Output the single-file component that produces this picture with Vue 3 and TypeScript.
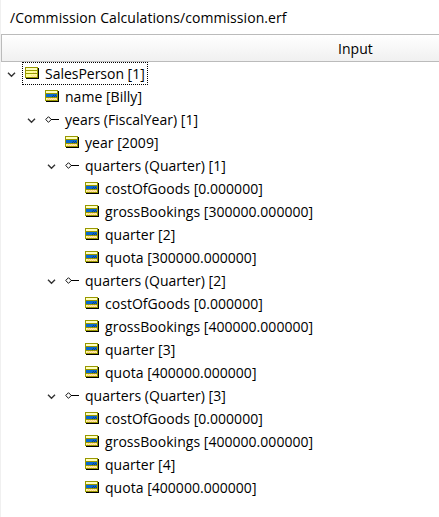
<script setup lang="ts">
interface TreeNode {
  label: string
  kind: 'entity' | 'attribute' | 'association'
  level: number
}

const path = '/Commission Calculations/commission.erf'

const attribute = (label: string, level: number): TreeNode => ({ label, kind: 'attribute', level })

const quarter = (index: number, amount: string): TreeNode[] => [
  { label: `quarters (Quarter) [${index}]`, kind: 'association', level: 2 },
  attribute('costOfGoods [0.000000]', 3),
  attribute(`grossBookings [${amount}]`, 3),
  attribute(`quarter [${index + 1}]`, 3),
  attribute(`quota [${amount}]`, 3),
]

const nodes: TreeNode[] = [
  { label: 'SalesPerson [1]', kind: 'entity', level: 0 },
  attribute('name [Billy]', 1),
  { label: 'years (FiscalYear) [1]', kind: 'association', level: 1 },
  attribute('year [2009]', 2),
  ...quarter(1, '300000.000000'),
  ...quarter(2, '400000.000000'),
  ...quarter(3, '400000.000000'),
]
</script>

<template>
  <main class="panel">
    <div class="path">{{ path }}</div>
    <div class="header">Input</div>
    <div class="tree" role="tree">
      <div
        v-for="(node, i) in nodes"
        :key="i"
        class="row"
        role="treeitem"
        :style="{ paddingLeft: node.level * 20 + 'px' }"
      >
        <span class="toggle">
          <svg v-if="node.kind !== 'attribute'" width="9" height="6" viewBox="0 0 9 6">
            <path d="M1 .8 4.5 4.3 8 .8" fill="none" stroke="#333" stroke-width="1.4" />
          </svg>
        </span>
        <span class="item" :class="{ focused: i === 0 }">
          <svg v-if="node.kind === 'association'" class="icon" width="14" height="12" viewBox="0 0 14 12">
            <path d="M.7 6.5 3.5 3.7 6.3 6.5 3.5 9.3Z" fill="#fff" stroke="#111" />
            <path d="M6 6.5H14" stroke="#000" />
          </svg>
          <svg v-else class="icon" width="14" height="12" viewBox="0 0 14 12" shape-rendering="crispEdges">
            <path d="M1 1H14V12H1Z" fill="#000" />
            <path d="M0 0H13V11H0Z" fill="#989800" />
            <path d="M1 1H12V3H1Z" fill="#ffffc0" />
            <template v-if="node.kind === 'entity'">
              <path d="M1 4H12V6H1ZM1 7H12V10H1Z" fill="#ffff98" />
              <path d="M8 5.5H12M6 8.5H12" stroke="#ffd0a0" stroke-dasharray="1 1" />
              <path d="M7 9.5H12" stroke="#ffd0a0" stroke-dasharray="1 1" />
            </template>
            <template v-else>
              <path d="M1 4H12V7H1Z" fill="#0868d0" />
              <path d="M8 5.5H12M7 6.5H12" stroke="#104080" stroke-dasharray="1 1" />
              <path d="M1 8H12V10H1Z" fill="#ffff98" />
              <path d="M3 8.5H12M2 9.5H12" stroke="#ffc098" stroke-dasharray="1 1" />
            </template>
          </svg>
          <span class="label">{{ node.label }}</span>
        </span>
      </div>
    </div>
  </main>
</template>

<style>
body { margin: 0; background: #fff; }
</style>

<style scoped>
.panel {
  box-sizing: border-box;
  height: 517px;
  border-left: 1px solid #f0f0f0;
  background: #fff;
  color: #000;
  font: 14px/23px "Open Sans", sans-serif;
  letter-spacing: 0.03px;
  white-space: nowrap;
  overflow: hidden;
}
.path {
  box-sizing: border-box;
  height: 34px;
  padding-left: 9px;
  line-height: 35px;
  letter-spacing: 0.07px;
}
.header {
  box-sizing: border-box;
  height: 28px;
  padding-left: 336px;
  border: 1px solid #bbb;
  border-right: 0;
  background: linear-gradient(#fff, #f0f0f0);
  line-height: 27px;
}
.row { display: flex; height: 23px; }
.toggle { display: flex; flex: none; box-sizing: border-box; width: 21px; padding: 10px 0 0 6px; }
.item { display: flex; box-sizing: border-box; height: 23px; padding-left: 3px; }
.focused { padding-right: 3px; outline: 1px dotted #000; outline-offset: -1px; }
.focused .label { letter-spacing: -0.02px; }
.icon { flex: none; margin: 5px 6px 0 0; }
svg { display: block; }
</style>
